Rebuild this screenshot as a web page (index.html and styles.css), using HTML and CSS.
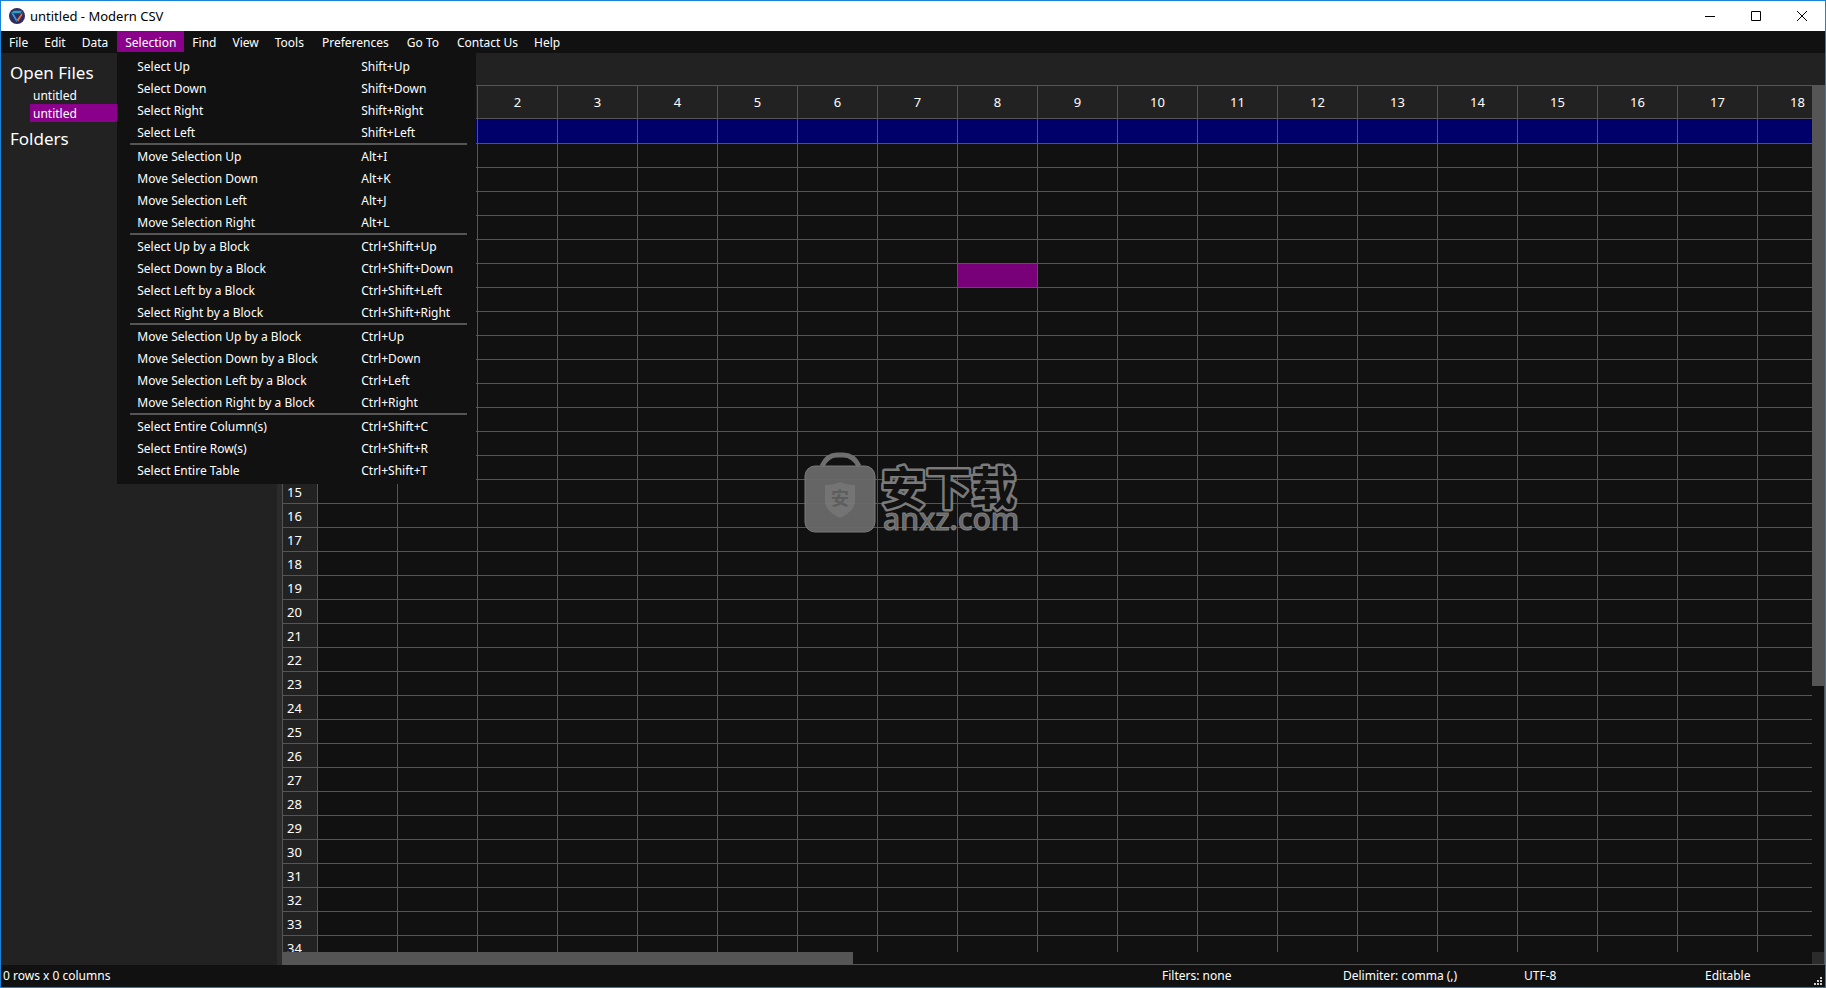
FILE: index.html
```html
<!DOCTYPE html>
<html lang="en">
<head>
<meta charset="utf-8">
<title>untitled - Modern CSV</title>
<link rel="stylesheet" href="styles.css">
</head>
<body>
<div class="window">
  <header class="titlebar">
    <svg class="app-icon" viewBox="0 0 16 16" aria-hidden="true">
      <circle cx="8" cy="8" r="8" fill="#2f2c5e"/>
      <path d="M2.2 4.4 5 2.8h8L11.6 5.2H5.6z" fill="#2ba3c4"/>
      <path d="M2 4.8 4.6 5.6l3.4 6-.4 2.6z" fill="#2e9fd8"/>
      <path d="M13.6 4 13 7.4 9 13.8l-1-2.2z" fill="#f0713c"/>
    </svg>
    <h1 class="title">untitled - Modern CSV</h1>
    <div class="controls">
      <button class="control" aria-label="Minimize"><svg viewBox="0 0 10 10"><path d="M0 5.5h10"/></svg></button>
      <button class="control" aria-label="Maximize"><svg viewBox="0 0 10 10"><path d="M.5.5h9v9h-9z"/></svg></button>
      <button class="control" aria-label="Close"><svg viewBox="0 0 10 10"><path d="M0 0l10 10M10 0L0 10"/></svg></button>
    </div>
  </header>

  <nav class="menubar">
    <button class="menu">File</button>
    <button class="menu">Edit</button>
    <button class="menu menu-data">Data</button>
    <div class="menu-holder">
      <button class="menu menu-open" aria-expanded="true">Selection</button>
      <div class="dropdown">
        <button class="item"><span>Select Up</span><span>Shift+Up</span></button>
        <button class="item"><span>Select Down</span><span>Shift+Down</span></button>
        <button class="item"><span>Select Right</span><span>Shift+Right</span></button>
        <button class="item"><span>Select Left</span><span>Shift+Left</span></button>
        <hr class="separator">
        <button class="item"><span>Move Selection Up</span><span>Alt+I</span></button>
        <button class="item"><span>Move Selection Down</span><span>Alt+K</span></button>
        <button class="item"><span>Move Selection Left</span><span>Alt+J</span></button>
        <button class="item"><span>Move Selection Right</span><span>Alt+L</span></button>
        <hr class="separator">
        <button class="item"><span>Select Up by a Block</span><span>Ctrl+Shift+Up</span></button>
        <button class="item"><span>Select Down by a Block</span><span>Ctrl+Shift+Down</span></button>
        <button class="item"><span>Select Left by a Block</span><span>Ctrl+Shift+Left</span></button>
        <button class="item"><span>Select Right by a Block</span><span>Ctrl+Shift+Right</span></button>
        <hr class="separator">
        <button class="item"><span>Move Selection Up by a Block</span><span>Ctrl+Up</span></button>
        <button class="item"><span>Move Selection Down by a Block</span><span>Ctrl+Down</span></button>
        <button class="item"><span>Move Selection Left by a Block</span><span>Ctrl+Left</span></button>
        <button class="item"><span>Move Selection Right by a Block</span><span>Ctrl+Right</span></button>
        <hr class="separator">
        <button class="item"><span>Select Entire Column(s)</span><span>Ctrl+Shift+C</span></button>
        <button class="item"><span>Select Entire Row(s)</span><span>Ctrl+Shift+R</span></button>
        <button class="item"><span>Select Entire Table</span><span>Ctrl+Shift+T</span></button>
      </div>
    </div>
    <button class="menu">Find</button>
    <button class="menu">View</button>
    <button class="menu menu-wide">Tools</button>
    <button class="menu menu-wide">Preferences</button>
    <button class="menu menu-wide">Go To</button>
    <button class="menu">Contact Us</button>
    <button class="menu">Help</button>
  </nav>

  <div class="workspace">
    <aside class="sidebar">
      <h2 class="heading">Open Files</h2>
      <button class="file">untitled</button>
      <button class="file file-active">untitled</button>
      <h2 class="heading">Folders</h2>
    </aside>
    <div class="splitter"></div>
    <main class="editor">
      <div class="sheet">
        <div class="viewport"><table class="cells" id="cells"></table></div>
        <div class="track"><div class="thumb thumb-y"></div></div>
        <div class="track"><div class="thumb thumb-x"></div></div>
        <div class="corner"></div>
      </div>
    </main>
  </div>

  <footer class="statusbar">
    <span>0 rows x 0 columns</span>
    <span>Filters: none</span>
    <span>Delimiter: comma (,)</span>
    <span>UTF-8</span>
    <span>Editable</span>
    <svg class="grip" viewBox="0 0 8 8" aria-hidden="true"><path d="M6 0h2v2H6zM3 3h2v2H3zM6 3h2v2H6zM0 6h2v2H0zM3 6h2v2H3zM6 6h2v2H6z"/></svg>
  </footer>

  <svg class="watermark" viewBox="0 0 218 84" role="img" aria-label="安下载 anxz.com">
    <path class="bag-edge" d="M18 14C22 6 28 3 33 3h6c6 0 12 3 16 11"/>
    <rect class="bag" x="1" y="14" width="70" height="66" rx="10"/>
    <path class="shield" d="M21 33c6 0 11-1 15-3 4 2 9 3 15 3v16c0 8-7 13-15 17-8-4-15-9-15-17z"/>
    <text class="shield-text" x="27" y="53">安</text>
    <text class="cn" x="77" y="53">安下载</text>
    <text class="domain" x="79" y="78">anxz.com</text>
  </svg>
</div>
<script src="sheet.js"></script>
</body>
</html>
```
FILE: styles.css
```css
* {
  box-sizing: border-box;
}

body {
  margin: 0;
  font: 12px/22px "Noto Sans", "Open Sans", sans-serif;
  color: #fff;
  background: #111;
}

button {
  margin: 0;
  padding: 0;
  border: 0;
  font: inherit;
  color: inherit;
  background: none;
  text-align: left;
  white-space: nowrap;
}

.window {
  position: relative;
  display: flex;
  flex-direction: column;
  height: 100vh;
  border: 1px solid #1883d7;
  overflow: hidden;
}

.titlebar {
  display: flex;
  align-items: center;
  flex: none;
  height: 30px;
  padding-left: 8px;
  color: #000;
  background: #fff;
}

.app-icon {
  width: 16px;
  height: 16px;
}

.title {
  flex: 1;
  margin: 0 0 0 5px;
  font-size: 13px;
  font-weight: 400;
}

.controls {
  display: flex;
  height: 100%;
}

.control {
  display: flex;
  align-items: center;
  justify-content: center;
  width: 46px;
}

.control svg {
  width: 10px;
  height: 10px;
  fill: none;
  stroke: #000;
}

.menubar {
  display: flex;
  flex: none;
  height: 22px;
  background: #111;
}

.menu {
  height: 21px;
  padding: 1px 8px 0;
  line-height: 21px;
}

.menu-data {
  padding-right: 9px;
}

.menu-wide {
  padding-right: 10px;
}

.menu-holder {
  position: relative;
}

.menu-open {
  background: #8b008b;
}

.dropdown {
  position: absolute;
  z-index: 2;
  top: 22px;
  left: 0;
  width: 359px;
  padding: 2px 9px 3px 13px;
  background: #111;
}

.item {
  display: grid;
  grid-template-columns: 224px 1fr;
  width: 100%;
  height: 22px;
  padding: 1px 0 0 7px;
  line-height: 21px;
}

.separator {
  height: 2px;
  margin: 0;
  border: 0;
  background: #555;
}

.workspace {
  display: flex;
  flex: 1;
  min-height: 0;
}

.sidebar {
  flex: none;
  width: 276px;
  padding-top: 3px;
  background: #222;
}

.heading {
  height: 30px;
  margin: 0;
  padding: 3px 0 0 9px;
  font-size: 17px;
  font-weight: 400;
  line-height: 27px;
}

.file {
  display: block;
  width: 247px;
  height: 18px;
  margin-left: 29px;
  padding: 1px 0 0 3px;
  line-height: 17px;
}

.file-active {
  background: #8b008b;
}

.splitter {
  flex: none;
  width: 5px;
  background: #2b2b2b;
}

.editor {
  display: flex;
  flex: 1;
  min-width: 0;
  padding-top: 32px;
  background: #222;
}

.sheet {
  display: grid;
  grid-template: minmax(0, 1fr) 12px / minmax(0, 1fr) 12px;
  flex: 1;
  min-width: 0;
  border: 1px solid #555;
  background: #111;
}

.viewport {
  overflow: hidden;
}

.track {
  background: #111;
}

.thumb {
  background: #555;
}

.thumb-y {
  height: 69.3%;
}

.thumb-x {
  width: 37.3%;
  height: 100%;
}

.corner {
  background: #2b2b2b;
}

.cells {
  width: max-content;
  table-layout: fixed;
  border-spacing: 0;
  font-size: 13px;
  line-height: 20px;
}

.cells th,
.cells td {
  width: 80px;
  height: 24px;
  padding: 0;
  border: solid #555;
  border-width: 1px 0 0 1px;
  font-weight: 400;
}

.cells th {
  background: #222;
}

.cells thead th {
  height: 32px;
  border-top: 0;
}

.cells .row-number {
  width: 34px;
  padding-left: 4px;
  border-left: 0;
  text-align: left;
}

.cells .cursor-row td {
  height: 25px;
  background: #00006b;
}

.cells .selected {
  background: #780078;
}

.statusbar {
  display: grid;
  grid-template-columns: 1fr 181px 181px 181px 120px;
  position: relative;
  flex: none;
  height: 22px;
  padding-left: 2px;
  background: #111;
}

.grip {
  position: absolute;
  right: 3px;
  bottom: 2px;
  width: 8px;
  height: 8px;
  fill: #ccc;
}

.watermark {
  position: absolute;
  z-index: 1;
  top: 50%;
  left: 50%;
  width: 218px;
  height: 84px;
  transform: translate(-50%, -50%);
  overflow: visible;
  opacity: 0.95;
  pointer-events: none;
}

.bag {
  fill: #6a6a6a;
  stroke: #808080;
}

.bag-edge {
  fill: none;
  stroke: #747474;
  stroke-width: 5px;
}

.shield {
  fill: #7a7a7a;
}

.shield-text {
  font: 700 18px "Noto Sans CJK SC", sans-serif;
  fill: #626262;
}

.cn {
  font: 700 45px "Noto Sans CJK SC", sans-serif;
  fill: #111;
  stroke: #808080;
  stroke-width: 5px;
  stroke-linejoin: round;
  paint-order: stroke;
}

.domain {
  font: 500 30px "Noto Sans", sans-serif;
  fill: #6c6c6c;
  stroke: #858585;
  stroke-width: 1px;
}
```
FILE: sheet.js
```js
const COLUMNS = 19;
const ROWS = 35;
const SELECTED = { row: 6, column: 8 };

const table = document.getElementById('cells');
const head = table.createTHead().insertRow();

function addHeader(row, text, className) {
  const th = document.createElement('th');
  th.textContent = text;
  th.className = className;
  row.append(th);
}

addHeader(head, '', 'row-number');
for (let c = 0; c < COLUMNS; c++) addHeader(head, c, '');

const body = table.createTBody();
for (let r = 0; r < ROWS; r++) {
  const row = body.insertRow();
  if (r === 0) row.className = 'cursor-row';
  addHeader(row, r, 'row-number');
  for (let c = 0; c < COLUMNS; c++) {
    const cell = row.insertCell();
    if (r === SELECTED.row && c === SELECTED.column) cell.className = 'selected';
  }
}
```
